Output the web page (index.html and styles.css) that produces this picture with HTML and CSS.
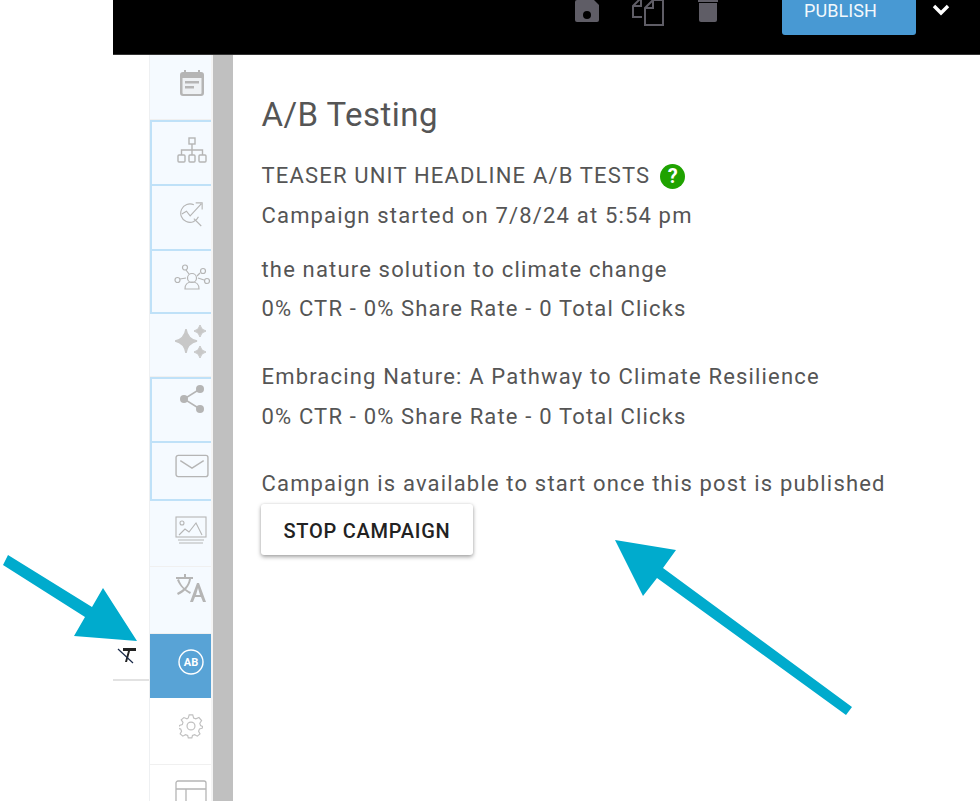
FILE: index.html
```html
<!DOCTYPE html>
<html lang="en">
<head>
<meta charset="utf-8">
<title>A/B Testing</title>
<link rel="stylesheet" href="styles.css">
</head>
<body>
<header class="topbar">
  <div class="tools">
    <svg class="tool tool-save" viewBox="0 0 26 24"><path fill="#5f5d66" d="M3 0h17l5 5v15a2 2 0 0 1-2 2H3a2 2 0 0 1-2-2V2a2 2 0 0 1 2-2z" transform="translate(0 2)"/><circle cx="13" cy="17" r="4" fill="#000"/></svg>
    <svg class="tool tool-copy" viewBox="0 0 34 28" fill="none" stroke="#5f5d66" stroke-width="2"><path d="M10 19H1V8l8-8h12v5"/><path d="M1 8h8V0"/><path d="M13 27V10l8-8h10v25z"/><path d="M13 10h8V2"/></svg>
    <svg class="tool tool-trash" viewBox="0 0 20 24"><path fill="#5f5d66" d="M0 0h20v4H0z"/><path fill="#5f5d66" d="M1 5h18v17a2 2 0 0 1-2 2H3a2 2 0 0 1-2-2z"/></svg>
  </div>
  <button class="publish">PUBLISH</button>
  <svg class="chevron" viewBox="0 0 18 12" fill="none" stroke="#fff" stroke-width="3.4"><path d="M2 2l7 7 7-7"/></svg>
</header>
<div class="shell">
  <nav class="rail">
    <div class="item h65 tint"><svg class="ic ic-cal" viewBox="0 0 24 26"><path fill="#b5b5b5" d="M4 0h2v2h12V0h2v2h1a3 3 0 0 1 3 3v18a3 3 0 0 1-3 3H3a3 3 0 0 1-3-3V5a3 3 0 0 1 3-3h1z"/><path fill="#eef1f4" d="M2.500 8h19v15a1 1 0 0 1-1 1h-17a1 1 0 0 1-1-1z"/><path fill="#b5b5b5" d="M5 11h14v2.400H5zM5 16h9v2.400H5z"/></svg></div>
    <div class="item h64 tint framed"><svg class="ic ic-map" viewBox="0 0 30 26" fill="none" stroke="#b5b5b5" stroke-width="1.400"><rect x="12" y="1" width="6" height="6"/><rect x="1" y="18" width="7" height="7" rx="1"/><rect x="12" y="18" width="6" height="7" rx="1"/><rect x="22" y="18" width="7" height="7" rx="1"/><path d="M15 7v11M4.500 18v-5h21v5"/></svg></div>
    <div class="item h65 tint framed"><svg class="ic" viewBox="0 0 26 28" fill="none" stroke="#b5b5b5" stroke-width="1.200"><path d="M20 17a10 10 0 1 1-5-13"/><path d="M2 14l5-3 4 5 12-13M17 2h7v7"/><path d="M15 19l8 8"/></svg></div>
    <div class="item h65 tint framed closed pad-people"><svg class="ic ic-people" viewBox="0 0 36 26" fill="none" stroke="#b5b5b5" stroke-width="1.200"><circle cx="11" cy="3.500" r="2.500"/><circle cx="29" cy="7" r="2.500"/><circle cx="3.500" cy="16" r="2.500"/><circle cx="33" cy="17" r="2.500"/><circle cx="18" cy="14" r="4.500"/><path d="M11 25c0-6 3-7 7-7s7 1 7 7zM12 6l3 4M26 9l-3 3M6 15l6-1M30 16l-6-2"/></svg></div>
    <div class="item h63 tint pad-spark"><svg class="ic ic-spark" viewBox="0 0 32 33" fill="#c8c8c8"><path d="M11 4Q12.500 14 22 16 12.500 18 11 28 9.500 18 0 16 9.500 14 11 4z" stroke="#c8c8c8" stroke-width="1.500"/><path d="M25 0Q26 5 31 6 26 7 25 12 24 7 19 6 24 5 25 0zM25 21Q26 26 31 27 26 28 25 33 24 28 19 27 24 26 25 21z" stroke="#c8c8c8" stroke-width="1"/></svg></div>
    <div class="item h64 tint framed pad-share"><svg class="ic ic-share" viewBox="0 0 24 28" fill="#b5b5b5"><circle cx="20" cy="4" r="4"/><circle cx="4" cy="14" r="4"/><circle cx="20" cy="24" r="4"/><path d="M20 4L4 14l16 10" fill="none" stroke="#b5b5b5" stroke-width="1.500"/></svg></div>
    <div class="item h60 tint framed closed pad-mail"><svg class="ic ic-wide" viewBox="0 0 32 22" fill="none" stroke="#b5b5b5" stroke-width="1.300"><rect x="1" y="1" width="30" height="20" rx="2"/><path d="M5 6l11 7 11-7"/></svg></div>
    <div class="item h66 tint"><svg class="ic ic-wide" viewBox="0 0 32 28" fill="none" stroke="#b5b5b5" stroke-width="1.100"><rect x="1" y="1" width="30" height="20"/><circle cx="7" cy="7" r="2"/><path d="M4 19l6-6 4 3 7-9 6 12M3 24h26M4 27h24"/></svg></div>
    <div class="item h67 tint pad-translate"><svg class="ic ic-wide" viewBox="0 0 30 28" fill="#b5b5b5"><path d="M0 3h17v2H0zM8 0h2v3H8z"/><path d="M3 5c2 7 7 11 12 13l-1 2C9 17 4 13 1 6zM13 5h2c-1 7-6 13-13 16l-1-2c6-3 11-7 12-14z"/><path d="M21 9h2l7 19h-3l-2-5h-6l-2 5h-3zM20 21h4l-2-7z"/></svg></div>
    <div class="item h64 active"><svg class="ic ic-ab" viewBox="0 0 26 26"><circle cx="13" cy="13" r="12" fill="none" stroke="#fff" stroke-width="1.400"/><text x="13" y="17" class="ab-text" text-anchor="middle">AB</text></svg></div>
    <div class="item h67"><svg class="ic" viewBox="0 0 26 26" fill="none" stroke="#c0c0c0" stroke-width="1.300"><path d="M11 1h4l1 3.500 2.500 1L22 4l3 3.500-2 3 .8 2.500L26 14v0l-.2 2-3.200 1-1 2.500 1.600 3-3 2.500-3-1.700-2.500 1-.7 2.700h-4l-.7-2.700-2.500-1-3 1.700-3-2.500 1.600-3-1-2.500-3.200-1L0 13l3.200-1 .8-2.500-2-3L5 4l3.500 1.500L10 4.500z" transform="scale(.96) translate(.5 0)"/><circle cx="13" cy="13" r="4.300"/></svg></div>
    <div class="item last"><svg class="ic ic-layout" viewBox="0 0 32 32" fill="none" stroke="#b5b5b5" stroke-width="1.300"><rect x="1" y="1" width="30" height="30" rx="2"/><path d="M1 9h30M11 9v22"/></svg></div>
  </nav>
  <div class="divider"></div>
  <main class="panel">
    <h1 class="title">A/B Testing</h1>
    <p class="line heading">TEASER UNIT HEADLINE A/B TESTS <span class="help">?</span></p>
    <p class="line started">Campaign started on 7/8/24 at 5:54 pm</p>
    <p class="line variant">the nature solution to climate change</p>
    <p class="line stats">0% CTR - 0% Share Rate - 0 Total Clicks</p>
    <p class="line variant variant-next">Embracing Nature: A Pathway to Climate Resilience</p>
    <p class="line stats stats-next">0% CTR - 0% Share Rate - 0 Total Clicks</p>
    <p class="line notice">Campaign is available to start once this post is published</p>
    <button class="stop">STOP CAMPAIGN</button>
  </main>
</div>
<div class="flyout"><svg class="flyout-icon" viewBox="0 0 20 20"><path fill="#222" d="M6 2h13v3h-6L10 16H8l3-11H6z"/><path stroke="#1b2b4a" stroke-width="1.200" d="M1 3l15 14"/></svg></div>
<svg class="arrows" viewBox="0 0 980 801"><path fill="#00abcd" d="M8 555L3 565 85 617 74 636 137 641 103 588 92 607z"/><path fill="#00abcd" d="M615 540L676 550 663 568 852 707 846 715 657 578 643 596z"/></svg>
</body>
</html>
```
FILE: styles.css
```css
* { box-sizing: border-box; }
html, body { margin: 0; height: 801px; overflow: hidden; background: #fff; }
body { font-family: Roboto, "Liberation Sans", sans-serif; color: #555; }

.topbar { height: 55px; margin-left: 113px; background: #000; border-bottom: 1px solid #333; display: flex; align-items: flex-start; position: relative; overflow: hidden; }
.tools { display: flex; align-items: flex-start; margin-left: 461px; margin-top: -2px; }
.tool { display: block; }
.tool-save { width: 26px; height: 24px; }
.tool-copy { width: 34px; height: 28px; margin-left: 32px; }
.tool-trash { width: 20px; height: 24px; margin-left: 32px; }
.publish { width: 134px; height: 36px; margin-left: 64px; border: 0; border-radius: 0 0 3px 3px; background: #4899d3; color: #f2f8fc; font: 400 18px/1 Roboto, sans-serif; letter-spacing: .1px; padding: 0 17px 12px 0; text-align: center; margin-top: -1px; }
.chevron { width: 18px; height: 12px; margin-left: 16px; margin-top: 4px; }

.shell { display: flex; margin-left: 149px; height: 746px; }
.rail { width: 64px; border-left: 1px solid #eef0f2; display: flex; flex-direction: column; border-right: 2px solid #f4f4f4; flex: none; }
.item { display: flex; justify-content: center; flex: none; padding-top: 15px; padding-left: 21px; border-bottom: 1px solid #f0f0f0; }
.tint { background: #f5faff; }
.framed { border: 2px solid #bfe1f8; border-right: 0; border-bottom: 0; padding-left: 20px; }
.closed { border-bottom: 2px solid #bfe1f8; }
.active { background: #58a3d6; border-bottom: 0; }
.h60 { height: 60px; } .h63 { height: 63px; } .h64 { height: 64px; } .h65 { height: 65px; } .h66 { height: 66px; } .h67 { height: 67px; }
.last { flex: 1; border-bottom: 0; }
.pad-people { padding-top: 13px; }
.pad-spark { padding-top: 11px; }
.pad-share { padding-top: 6px; }
.pad-mail { padding-top: 9px; }
.pad-translate { padding-top: 7px; }
.ic { width: 24px; height: 26px; display: block; flex: none; }
.ic-cal { margin-left: 1px; }
.ic-map { width: 30px; }
.ic-people { width: 36px; }
.ic-spark { width: 32px; height: 33px; }
.ic-share { height: 28px; }
.ic-wide { width: 34px; height: 28px; }
.ic-ab { width: 26px; height: 26px; }
.ic-layout { width: 32px; height: 32px; }
.ab-text { font: 700 11px Roboto, sans-serif; fill: #fff; }
.divider { width: 20px; flex: none; background: #c0c0c0; }

.panel { flex: 1; padding: 40px 0 0 28.5px; }
.title { margin: 0 0 26px; font-size: 33px; font-weight: 400; line-height: 40px; color: #555; letter-spacing: .45px; }
.line { margin: 0; font-size: 22px; line-height: 30px; letter-spacing: 1.17px; white-space: nowrap; color: #555; }
.heading { display: flex; align-items: center; gap: 10px; }
.started { margin-top: 10px; }
.variant { margin-top: 24px; }
.variant + .stats { margin-top: 9px; }
.variant-next { margin-top: 38px; }
.variant + .stats-next { margin-top: 10px; }
.notice { margin-top: 37px; }
.help { width: 25px; height: 25px; border-radius: 50%; background: #1fa200; color: #fff; font-size: 20px; font-weight: 700; line-height: 25px; text-align: center; letter-spacing: 0; }
.stop { display: block; width: 212px; height: 51px; margin: 5px 0 0 -.5px; padding: 2px 0 0; border: 0; border-radius: 3px; background: #fff; color: #222; font: 500 20px/1 Roboto, sans-serif; letter-spacing: .75px; box-shadow: 0 2px 4px rgba(0,0,0,.35), 0 0 3px rgba(0,0,0,.1); }

.flyout { position: absolute; left: 113px; top: 640px; width: 36px; height: 41px; background: #fff; border-bottom: 2px solid #e2e2e2; }
.flyout-icon { position: absolute; left: 4px; top: 6px; width: 20px; height: 20px; }
.arrows { position: absolute; left: 0; top: 0; width: 980px; height: 801px; pointer-events: none; }
```
